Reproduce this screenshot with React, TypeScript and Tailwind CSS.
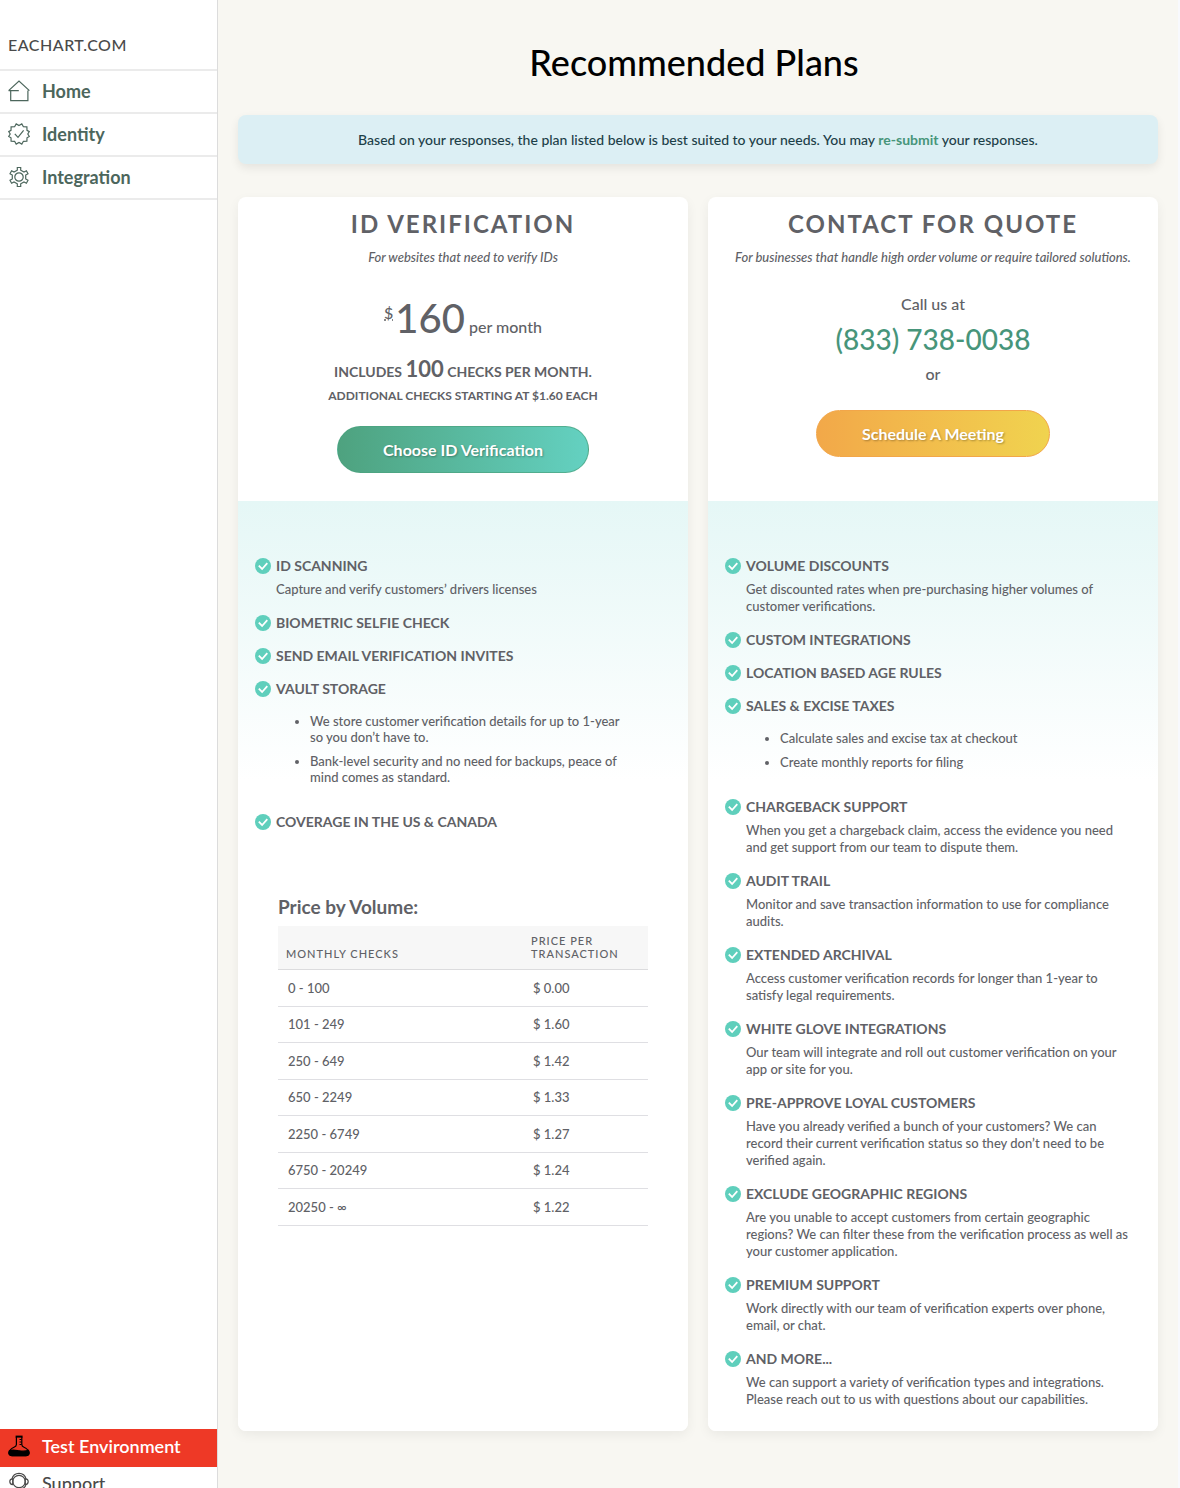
import type { ReactNode } from "react";

type Feature = { title: string; text?: string; points?: string[] };

const idFeatures: Feature[] = [
  { title: "ID SCANNING", text: "Capture and verify customers’ drivers licenses" },
  { title: "BIOMETRIC SELFIE CHECK" },
  { title: "SEND EMAIL VERIFICATION INVITES" },
  {
    title: "VAULT STORAGE",
    points: [
      "We store customer verification details for up to 1-year so you don’t have to.",
      "Bank-level security and no need for backups, peace of mind comes as standard.",
    ],
  },
  { title: "COVERAGE IN THE US & CANADA" },
];

const quoteFeatures: Feature[] = [
  { title: "VOLUME DISCOUNTS", text: "Get discounted rates when pre-purchasing higher volumes of customer verifications." },
  { title: "CUSTOM INTEGRATIONS" },
  { title: "LOCATION BASED AGE RULES" },
  { title: "SALES & EXCISE TAXES", points: ["Calculate sales and excise tax at checkout", "Create monthly reports for filing"] },
  { title: "CHARGEBACK SUPPORT", text: "When you get a chargeback claim, access the evidence you need and get support from our team to dispute them." },
  { title: "AUDIT TRAIL", text: "Monitor and save transaction information to use for compliance audits." },
  { title: "EXTENDED ARCHIVAL", text: "Access customer verification records for longer than 1-year to satisfy legal requirements." },
  { title: "WHITE GLOVE INTEGRATIONS", text: "Our team will integrate and roll out customer verification on your app or site for you." },
  { title: "PRE-APPROVE LOYAL CUSTOMERS", text: "Have you already verified a bunch of your customers? We can record their current verification status so they don’t need to be verified again." },
  { title: "EXCLUDE GEOGRAPHIC REGIONS", text: "Are you unable to accept customers from certain geographic regions? We can filter these from the verification process as well as your customer application." },
  { title: "PREMIUM SUPPORT", text: "Work directly with our team of verification experts over phone, email, or chat." },
  { title: "AND MORE...", text: "We can support a variety of verification types and integrations. Please reach out to us with questions about our capabilities." },
];

const prices = [
  ["0 - 100", "$ 0.00"],
  ["101 - 249", "$ 1.60"],
  ["250 - 649", "$ 1.42"],
  ["650 - 2249", "$ 1.33"],
  ["2250 - 6749", "$ 1.27"],
  ["6750 - 20249", "$ 1.24"],
  ["20250 - ∞", "$ 1.22"],
];

function Icon({ children }: { children: ReactNode }) {
  return (
    <svg viewBox="0 0 22 22" className="size-[22px] shrink-0" fill="none" stroke="currentColor" strokeWidth="1.2" aria-hidden="true">
      {children}
    </svg>
  );
}

function HomeIcon() {
  return (
    <Icon>
      <path d="M.6 10.6 11 1l10.4 9.6M2.7 10v10.6h17.2v-10M.6 10.6h10.2" />
    </Icon>
  );
}

function BadgeIcon() {
  return (
    <Icon>
      <path d="m11 2.6 2.8-1.7 1.6 2.8 3.5.1.1 3.6 2.3 1.2-1.5 2.4 1.5 2.5-2.3 1.3-.1 3.4-3.5.1-1.6 2.8-2.8-1.6-2.8 1.6-1.6-2.8-3.5-.1-.1-3.4-2.3-1.3L2.2 11 .7 8.6 3 7.4l.1-3.6 3.5-.1L8.2.9z" />
      <path d="m6.8 10.8 3.2 3.6 5.6-7" />
    </Icon>
  );
}

function GearIcon() {
  return (
    <Icon>
      <path d="M9.3 4.2V1.5h3.4v2.7L16 6.1l2.4-1.3L20 7.7l-2.300 1.400v3.800l2.300 1.400-1.600 2.900-2.400-1.300-3.300 1.900v2.700H9.300v-2.700L6 15.900l-2.400 1.300L2 14.300l2.300-1.400V9.100L2 7.700l1.600-2.900L6 6.100z" />
      <circle cx="11" cy="11" r="4.2" />
    </Icon>
  );
}

function FlaskIcon() {
  return (
    <Icon>
      <path d="M8.400 2v7.400c0 1.400-1 2.200-2.400 2.800-2.600 1.200-4.800 3.200-5 5.400-.2 1.900 1 3.100 3 3.100h14c2 0 3.200-1.200 3-3.100-.2-2.200-2.400-4.200-5-5.400-1.400-.6-2.200-1.400-2.200-2.800V2" />
      <path d="M7.600 1.600h7" strokeWidth="2" />
      <path d="M11.500 4.500h2M11.500 7h2M11.500 9.500h2" />
      <path d="M1.400 15.800c3-1.600 6.200-.6 9.600 0s6.600.6 9.500-.4c1.300 3.200.3 5.300-2.500 5.300H4c-2.800 0-3.800-2-2.600-4.900z" fill="currentColor" />
    </Icon>
  );
}

function HeadsetIcon() {
  return (
    <Icon>
      <circle cx="11" cy="9.5" r="6.2" />
      <path d="M3.800 7.300C4.800 3.600 7.500 1.400 11 1.400s6.200 2.200 7.200 5.900" />
      <path d="M4.800 6.800c-2 0-3 1-3 2.800s1 3 3 3zM17.200 6.800c2 0 3 1 3 2.800s-1 3-3 3zM18 12.600c-.6 2.600-2.600 4-5.600 4.200M9.600 16.800h2.800" />
    </Icon>
  );
}

function CheckIcon() {
  return (
    <svg viewBox="0 0 16 16" className="size-4 shrink-0" aria-hidden="true">
      <circle cx="8" cy="8" r="8" fill="#5fcfbc" />
      <path d="m3.800 7.700 3.300 3.300 5.200-5.800" fill="none" stroke="#fff" strokeWidth="1.8" />
    </svg>
  );
}

function NavItem({ icon, label }: { icon: ReactNode; label: string }) {
  return (
    <li className="border-b-2 border-[#ebebeb]">
      <a href="#" className="flex h-[41px] items-center gap-3 pb-[2px] pl-2 text-lg font-bold text-[#4c665c]">
        {icon}
        {label}
      </a>
    </li>
  );
}

function FeatureList({ items }: { items: Feature[] }) {
  return (
    <ul className="flex flex-col gap-4">
      {items.map((f) => (
        <li key={f.title}>
          <h3 className="flex items-center gap-[5px] text-sm leading-[17px] font-bold">
            <CheckIcon />
            {f.title}
          </h3>
          {f.text && <p className="mt-[7px] pr-2 pl-[21px] text-[13px] leading-[17px] font-medium">{f.text}</p>}
          {f.points && (
            <ul className="mt-4 mb-3 flex list-disc flex-col gap-2 pr-9 pl-[55px] text-[13px] leading-4 font-medium">
              {f.points.map((p) => (
                <li key={p}>{p}</li>
              ))}
            </ul>
          )}
        </li>
      ))}
    </ul>
  );
}

function PlanCard({ title, tagline, head, children }: { title: string; tagline: string; head: ReactNode; children: ReactNode }) {
  return (
    <section className="flex flex-col overflow-hidden rounded-lg bg-white shadow-[0_4px_12px_rgba(0,0,0,0.06)]">
      <div className="flex h-[304px] flex-col items-center pt-3 text-center">
        <h2 className="text-2xl leading-[30px] font-bold tracking-[2px]">{title}</h2>
        <p className="mt-2 text-[13px] leading-5 font-medium italic">{tagline}</p>
        {head}
      </div>
      <div className="grow bg-[linear-gradient(#e5f7f6,#ffffff_280px)] px-[17px] pt-14 pb-[23px]">{children}</div>
    </section>
  );
}

export default function App() {
  return (
    <div className="flex min-h-screen border-r-2 border-[#f8f9fd] bg-[#f8f7f2] font-[Lato,sans-serif] text-[#606166]">
      <aside className="sticky top-0 flex h-screen w-[218px] shrink-0 flex-col overflow-hidden border-r border-[#dcdcdc] bg-white">
        <div className="border-b-2 border-[#ebebeb] px-2 pt-[33px] pb-3 text-base leading-6 font-medium tracking-[0.5px] text-[#4a4a4a]">EACHART.COM</div>
        <nav>
          <ul>
            <NavItem icon={<HomeIcon />} label="Home" />
            <NavItem icon={<BadgeIcon />} label="Identity" />
            <NavItem icon={<GearIcon />} label="Integration" />
          </ul>
        </nav>
        <nav className="mt-auto -mb-3 text-lg">
          <a href="#" className="flex h-[38px] items-center gap-3 bg-[#ee3926] pb-1 pl-2 font-semibold text-white">
            <span className="text-black">
              <FlaskIcon />
            </span>
            Test Environment
          </a>
          <a href="#" className="flex h-[33px] items-center gap-3 pb-[2px] pl-2 font-medium text-[#4a4a4a]">
            <HeadsetIcon />
            Support
          </a>
        </nav>
      </aside>

      <main className="min-w-0 grow pr-5 pb-14 pl-5">
        <h1 className="pt-[39px] pr-2 text-center text-4xl leading-[46px] font-medium text-black">Recommended Plans</h1>
        <p className="mt-[30px] rounded-lg bg-[#dceff4] py-[14px] text-center text-sm leading-[21px] font-medium text-[#1c4048] shadow-[0_4px_10px_rgba(0,0,0,0.08)]">
          Based on your responses, the plan listed below is best suited to your needs. You may{" "}
          <a href="#" className="font-bold text-[#47957a]">re-submit</a> your responses.
        </p>

        <div className="mt-[33px] grid grid-cols-2 gap-5">
          <PlanCard
            title="ID VERIFICATION"
            tagline="For websites that need to verify IDs"
            head={
              <>
                <p className="mt-6 flex items-baseline leading-[54px]">
                  <sup className="self-start pt-[22px] text-base leading-4 font-medium underline decoration-dotted">$</sup>
                  <span className="pl-[2px] text-[40px] font-medium">160</span>
                  <span className="pl-1 text-base font-medium">per month</span>
                </p>
                <p className="mt-[10px] text-sm leading-7 font-bold">
                  INCLUDES <span className="text-[22px]">100</span> CHECKS PER MONTH.
                </p>
                <p className="text-xs leading-5 font-bold">ADDITIONAL CHECKS STARTING AT $1.60 EACH</p>
                <button type="button" className="mt-5 h-[47px] w-[252px] rounded-full border border-[#4ba37f]/70 bg-linear-to-r from-[#4ea27f] to-[#64d1c1] text-base font-bold text-white [text-shadow:1px_1px_2px_rgba(0,0,0,0.3)]">
                  Choose ID Verification
                </button>
              </>
            }
          >
            <FeatureList items={idFeatures} />
            <div className="px-[23px] pt-[65px]">
              <h3 className="text-[19px] leading-6 font-bold">Price by Volume:</h3>
              <table className="mt-[7px] w-full text-left text-[13px] font-medium">
                <thead>
                  <tr className="h-[43px] border-b border-[#dcdcde] bg-[#f7f7f7] align-bottom text-[11px] leading-[13px] tracking-[1px]">
                    <th className="px-2 pb-[9px] font-medium">MONTHLY CHECKS</th>
                    <th className="w-[125px] px-2 pb-[9px] font-medium">PRICE PER TRANSACTION</th>
                  </tr>
                </thead>
                <tbody>
                  {prices.map(([range, price]) => (
                    <tr key={range} className="h-9 border-b border-[#dfdfe3] odd:h-[37px]">
                      <td className="px-[10px] leading-5">{range}</td>
                      <td className="px-[10px] leading-5">{price}</td>
                    </tr>
                  ))}
                </tbody>
              </table>
            </div>
          </PlanCard>

          <PlanCard
            title="CONTACT FOR QUOTE"
            tagline="For businesses that handle high order volume or require tailored solutions."
            head={
              <>
                <p className="mt-[27px] text-base leading-5 font-medium">Call us at</p>
                <a href="tel:8337380038" className="mt-[7px] text-[28px] leading-9 font-medium text-[#47957a]">(833) 738-0038</a>
                <p className="mt-[7px] text-base leading-5 font-medium">or</p>
                <button type="button" className="mt-[26px] h-[47px] w-[234px] rounded-full border border-[#f2a649] bg-linear-to-r from-[#f2a849] to-[#f0d34f] text-base font-bold text-white [text-shadow:1px_1px_2px_rgba(0,0,0,0.3)]">
                  Schedule A Meeting
                </button>
              </>
            }
          >
            <FeatureList items={quoteFeatures} />
          </PlanCard>
        </div>
      </main>
    </div>
  );
}
